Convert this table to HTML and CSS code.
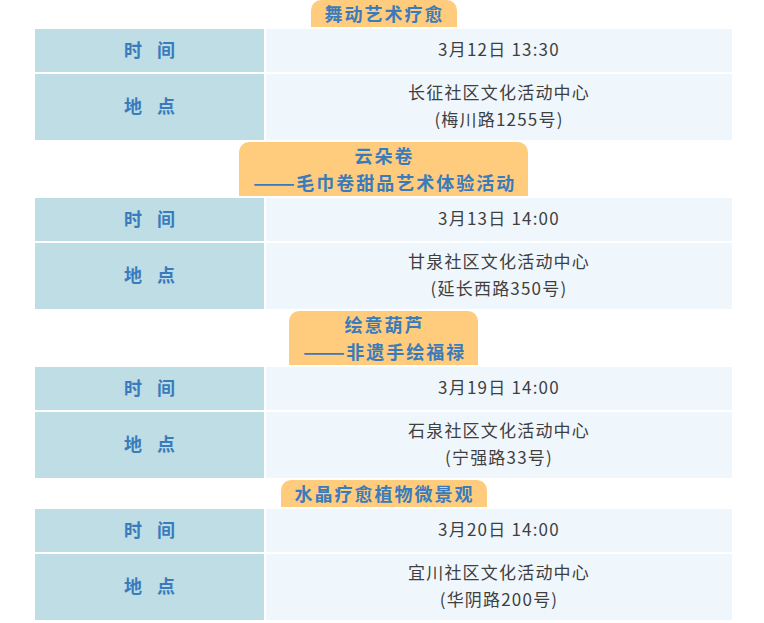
FILE: index.html
```html
<!DOCTYPE html>
<html lang="zh-CN">
<head>
<meta charset="utf-8">
<title>活动安排</title>
<link rel="stylesheet" href="styles.css">
</head>
<body>
<div class="schedule">
  <div class="tab-row"><div class="tab">舞动艺术疗愈</div></div>
  <div class="row time"><div class="label">时间</div><div class="value">3月12日 13:30</div></div>
  <div class="row place"><div class="label">地点</div><div class="value">长征社区文化活动中心<br>(梅川路1255号)</div></div>

  <div class="tab-row"><div class="tab">云朵卷<br><span class="dash">——</span>毛巾卷甜品艺术体验活动</div></div>
  <div class="row time"><div class="label">时间</div><div class="value">3月13日 14:00</div></div>
  <div class="row place"><div class="label">地点</div><div class="value">甘泉社区文化活动中心<br>(延长西路350号)</div></div>

  <div class="tab-row"><div class="tab">绘意葫芦<br><span class="dash">——</span>非遗手绘福禄</div></div>
  <div class="row time"><div class="label">时间</div><div class="value">3月19日 14:00</div></div>
  <div class="row place"><div class="label">地点</div><div class="value">石泉社区文化活动中心<br>(宁强路33号)</div></div>

  <div class="tab-row"><div class="tab">水晶疗愈植物微景观</div></div>
  <div class="row time"><div class="label">时间</div><div class="value">3月20日 14:00</div></div>
  <div class="row place"><div class="label">地点</div><div class="value">宜川社区文化活动中心<br>(华阴路200号)</div></div>
</div>
</body>
</html>
```

FILE: styles.css
```css
html, body {
  margin: 0;
  padding: 0;
  background: #ffffff;
}

body {
  font-family: "Noto Sans CJK SC", "Noto Sans", sans-serif;
}

.schedule {
  width: 697px;
  margin-left: 35px;
  display: flex;
  flex-direction: column;
  gap: 2px;
}

.tab-row {
  display: flex;
  justify-content: center;
}

.tab {
  background: #fecc7c;
  border-radius: 10px 10px 0 0;
  padding: 0 12px 0 14px;
  color: #3a7bbd;
  font-size: 18px;
  font-weight: 700;
  letter-spacing: 2px;
  line-height: 27px;
  text-align: center;
}

.dash {
  display: inline-block;
  transform: scaleX(1.37);
  transform-origin: left center;
  letter-spacing: 0;
  margin-right: 13px;
}

.row {
  display: grid;
  grid-template-columns: 229px 1fr;
  column-gap: 2px;
}

.row.time {
  height: 43px;
}

.row.place {
  height: 66px;
}

.label {
  background: #bedde4;
  display: flex;
  align-items: center;
  justify-content: center;
  color: #3a7bbd;
  font-size: 18px;
  font-weight: 700;
  letter-spacing: 15px;
  padding-left: 15px;
  padding-bottom: 4px;
}

.value {
  background: #eff7fd;
  display: flex;
  align-items: center;
  justify-content: center;
  text-align: center;
  color: #3f3f3f;
  font-size: 17px;
  letter-spacing: 1.2px;
  line-height: 27px;
  padding-bottom: 4px;
}
```
